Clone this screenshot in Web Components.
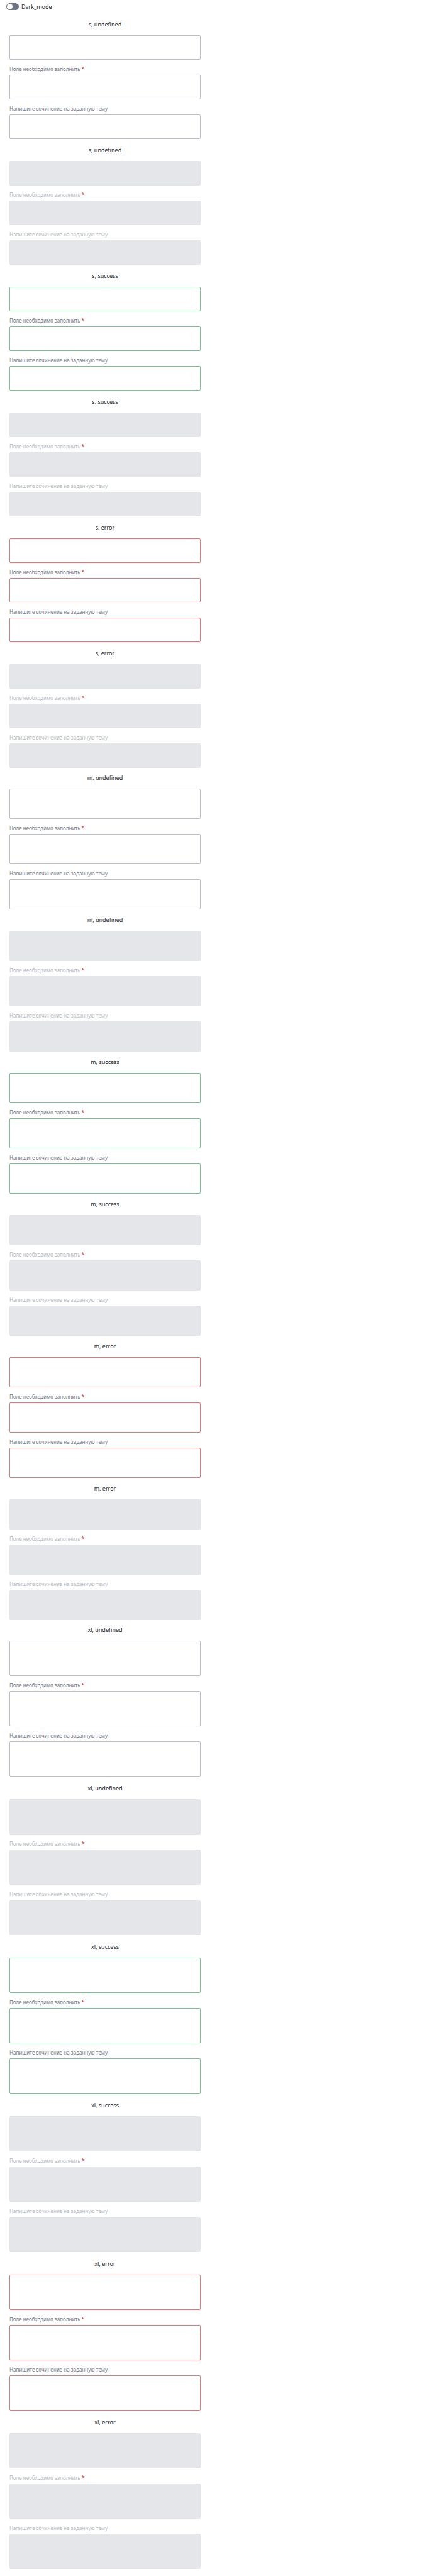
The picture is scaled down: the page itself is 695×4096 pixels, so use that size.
<!DOCTYPE html>
<html lang="ru">
<head>
<meta charset="utf-8">
<title>TextArea</title>
<style>
  body { margin: 0; background: #fff; color: #21242c; font-family: "Noto Sans", sans-serif; }
</style>
</head>
<body>
<textarea-catalogue></textarea-catalogue>

<template id="theme-switch">
  <style>
    :host { display: flex; }
    label { display: flex; align-items: center; gap: 4px; font-size: 9px; line-height: 11px; cursor: pointer; }
    input { appearance: none; display: flex; width: 20px; height: 11px; margin: 0; padding: 1px; box-sizing: border-box; border-radius: 6px; background: #717681; cursor: pointer; }
    input::before { content: ""; width: 9px; height: 9px; border-radius: 50%; background: #fff; }
    input:checked { justify-content: flex-end; background: #21a053; }
  </style>
  <label><input type="checkbox" role="switch"><slot></slot></label>
</template>

<template id="text-area">
  <style>
    :host { display: flex; flex-direction: column; --line: #bcbdc8; }
    :host([status="success"]) { --line: #74c392; }
    :host([status="error"]) { --line: #e87474; }
    label { margin: 9px 0 3px; font-size: 8px; line-height: 12px; color: #787d88; }
    label[hidden] { display: none; }
    .mark { color: #e01f1f; }
    textarea { display: block; width: 100%; height: var(--field-height); margin: 0; padding: 4px 6px; box-sizing: border-box; border: 1px solid var(--line); border-radius: 2px; background: #fff; color: inherit; font: inherit; font-size: 9px; resize: none; outline: none; }
    :host([disabled]) label { color: #b7bbc4; }
    :host([disabled]) textarea { border-color: #e5e6ea; background: #e5e6ea; }
  </style>
  <label for="field"><slot></slot><span class="mark"></span></label>
  <textarea id="field"></textarea>
</template>

<template id="state-section">
  <style>
    :host { display: block; }
    h2 { margin: 0 0 10px; font-size: 9px; line-height: 14px; font-weight: 400; text-align: center; }
  </style>
  <section><h2></h2><slot></slot></section>
</template>

<template id="size-group">
  <style>
    :host { display: flex; flex-direction: column; gap: var(--section-gap); }
    :host([size="s"]) { --field-height: 39px; --section-gap: 11px; }
    :host([size="m"]) { --field-height: 48px; --section-gap: 10px; }
    :host([size="xl"]) { --field-height: 56px; --section-gap: 12px; }
  </style>
</template>

<template id="textarea-catalogue">
  <style>
    :host { display: block; }
    header { padding: 5px 10px 16px; }
    main { display: flex; flex-direction: column; gap: 9px; max-width: 304px; padding: 0 15px 12px; }
  </style>
  <header><theme-switch>Dark_mode</theme-switch></header>
  <main>
    <size-group size="s"></size-group>
    <size-group size="m"></size-group>
    <size-group size="xl"></size-group>
  </main>
</template>

<script>
  class TemplateElement extends HTMLElement {
    constructor() {
      super();
      const template = document.getElementById(this.localName);
      this.attachShadow({ mode: "open" }).append(template.content.cloneNode(true));
    }
  }

  class ThemeSwitch extends TemplateElement {}

  class TextArea extends TemplateElement {
    connectedCallback() {
      const label = this.shadowRoot.querySelector("label");
      const field = this.shadowRoot.querySelector("textarea");
      label.hidden = !this.textContent.trim();
      if (label.hidden) field.setAttribute("aria-label", "Текст");
      field.disabled = this.hasAttribute("disabled");
      field.required = this.hasAttribute("required");
      this.shadowRoot.querySelector(".mark").textContent = field.required ? " *" : "";
    }
  }

  class StateSection extends TemplateElement {
    connectedCallback() {
      this.shadowRoot.querySelector("h2").textContent = this.getAttribute("heading");
    }
  }

  // Shows every status of one size, first enabled and then disabled.
  class SizeGroup extends TemplateElement {
    connectedCallback() {
      for (const status of ["undefined", "success", "error"]) {
        for (const state of ["", "disabled"]) {
          const attrs = `status="${status}" ${state}`;
          const section = document.createElement("state-section");
          section.setAttribute("heading", `${this.getAttribute("size")}, ${status}`);
          section.innerHTML =
            `<text-area ${attrs}></text-area>` +
            `<text-area ${attrs} required>Поле необходимо заполнить</text-area>` +
            `<text-area ${attrs}>Напишите сочинение на заданную тему</text-area>`;
          this.shadowRoot.append(section);
        }
      }
    }
  }

  class TextareaCatalogue extends TemplateElement {}

  customElements.define("theme-switch", ThemeSwitch);
  customElements.define("text-area", TextArea);
  customElements.define("state-section", StateSection);
  customElements.define("size-group", SizeGroup);
  customElements.define("textarea-catalogue", TextareaCatalogue);
</script>
</body>
</html>
